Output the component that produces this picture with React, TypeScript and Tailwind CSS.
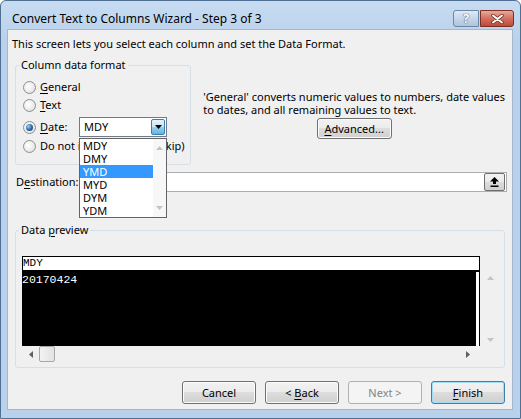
import React from "react";

const btnBase =
  "flex items-center justify-center rounded-[3px] border text-[11px] leading-none";
const btnNormal =
  "border-[#707070] bg-[linear-gradient(#f2f2f2_0%,#ebebeb_49%,#dddddd_50%,#cfcfcf_100%)] shadow-[inset_0_0_0_1px_#fcfcfc] text-black";

function U({ children }: { children: React.ReactNode }) {
  return <span className="underline underline-offset-[2px] decoration-1">{children}</span>;
}

function Radio({ checked }: { checked?: boolean }) {
  return (
    <span className="flex h-[13px] w-[13px] shrink-0 items-center justify-center rounded-full border border-[#8e8f8f] bg-[radial-gradient(circle_at_40%_40%,#ffffff,#ececec_55%,#cfcfcf)]">
      {checked && (
        <span className="h-[7px] w-[7px] rounded-full bg-[radial-gradient(circle_at_35%_35%,#9fd0f5,#2a64a3_55%,#16395f)]" />
      )}
    </span>
  );
}

const dateFormats = ["MDY", "DMY", "YMD", "MYD", "DYM", "YDM"];

function DateCombo() {
  return (
    <div className="relative z-10 h-[20px] w-[88px]">
      <div className="flex h-full items-center border border-[#6d7b8a] bg-white pl-[4px]">
        <span className="flex-1">MDY</span>
        <span className="mr-[1px] flex h-[16px] w-[14px] items-center justify-center rounded-[2px] border border-[#3c7fb1] bg-[linear-gradient(#e5f4fc_0%,#c4e5f6_49%,#98d1ef_50%,#68b3db_100%)]">
          <svg width="7" height="4" viewBox="0 0 7 4">
            <path d="M0 0H7L3.5 4Z" fill="#000" />
          </svg>
        </span>
      </div>
      {/* open list */}
      <div className="absolute left-0 top-[21px] flex h-[80px] w-[88px] border border-[#646464] bg-white">
        <div className="flex w-[73px] flex-col">
          {dateFormats.map((f) => (
            <div
              key={f}
              className={
                f === "YMD"
                  ? "h-[13px] bg-[#3399ff] pl-[3px] leading-[13px] text-white"
                  : "h-[13px] pl-[3px] leading-[13px] text-black"
              }
            >
              {f}
            </div>
          ))}
        </div>
        <div className="flex flex-1 flex-col items-center justify-between bg-[#f7f7f7] py-[7px]">
          <svg width="7" height="4" viewBox="0 0 7 4">
            <path d="M0 4H7L3.5 0Z" fill="#c4c4c4" />
          </svg>
          <svg width="7" height="4" viewBox="0 0 7 4">
            <path d="M0 0H7L3.5 4Z" fill="#c4c4c4" />
          </svg>
        </div>
      </div>
    </div>
  );
}

export default function App() {
  return (
    <div className="h-[419px] w-[521px] bg-white font-['Segoe_UI','Noto_Sans',sans-serif] text-[11px] text-black">
      <div className="flex h-full w-full flex-col rounded-t-[6px] border border-[#4f6f93] bg-[linear-gradient(#c7dcf2,#b9d1ea_40px,#b9d1ea)]">
        {/* title bar */}
        <div className="flex h-[28px] shrink-0 pl-[11px] pr-[6px]">
          <span className="flex-1 pt-[10px] text-[12px] leading-[16px]">Convert Text to Columns Wizard - Step 3 of 3</span>
          <div className="mt-[9px] flex h-[17px] gap-[1px]">
            <span className="flex w-[26px] items-center justify-center rounded-l-[3px] border border-[#6d87a6] bg-[linear-gradient(#dfe9f5,#c6d6ea_50%,#adc3dc)] text-[13px] font-bold text-white [text-shadow:0_0_1px_#2e4a6a,0_0_1px_#2e4a6a]">
              ?
            </span>
            <span className="flex w-[34px] items-center justify-center rounded-r-[3px] border border-[#7a2f24] bg-[linear-gradient(#e9a99b,#d2705f_50%,#c04a36)]">
              <svg width="13" height="10" viewBox="0 0 13 10">
                <path d="M2 1.5L11 8.5M11 1.5L2 8.5" stroke="#6b2418" strokeWidth="3.4" strokeLinecap="round" />
                <path d="M2 1.5L11 8.5M11 1.5L2 8.5" stroke="#ffffff" strokeWidth="2" strokeLinecap="round" />
              </svg>
            </span>
          </div>
        </div>

        {/* client area */}
        <div className="ml-[6px] flex h-[381px] w-[506px] flex-col border border-[#a3b7cf] bg-[#f0f0f0]">
          <div className="pl-[4px] pt-[6px] leading-[16px]">
            This screen lets you select each column and set the Data Format.
          </div>

          <div className="mt-[5px] flex">
            <fieldset className="ml-[7px] h-[108px] w-[178px] rounded-[3px] border border-[#d5dfe5]">
              <legend className="ml-[3px] px-[2px] leading-[16px]">Column data format</legend>
              <div className="flex flex-col pl-[7px] pt-[5px]">
                <div className="flex h-[18px] items-center gap-[4px]">
                  <Radio />
                  <span>
                    <U>G</U>eneral
                  </span>
                </div>
                <div className="flex h-[18px] items-center gap-[4px]">
                  <Radio />
                  <span>
                    <U>T</U>ext
                  </span>
                </div>
                <div className="mt-[3px] flex h-[20px] items-center gap-[4px]">
                  <Radio checked />
                  <span className="w-[35px]">
                    <U>D</U>ate:
                  </span>
                  <DateCombo />
                </div>
                <div className="flex h-[18px] items-center gap-[4px] whitespace-nowrap">
                  <Radio />
                  <span>Do not import column (skip)</span>
                </div>
              </div>
            </fieldset>

            <div className="ml-[12px] flex flex-1 flex-col items-center pr-[7px] pt-[33px]">
              <p className="self-start whitespace-nowrap leading-[13px]">
                'General' converts numeric values to numbers, date values
                <br />
                to dates, and all remaining values to text.
              </p>
              <button className={`${btnBase} ${btnNormal} mt-[2px] h-[21px] w-[75px]`}>
                <U>A</U>dvanced...
              </button>
            </div>
          </div>

          <div className="mt-[7px] flex h-[20px] items-center">
            <span className="w-[71px] pl-[8px]">
              D<U>e</U>stination:
            </span>
            <div className="mr-[5px] flex h-[20px] flex-1 items-center justify-end border border-[#abadb3] bg-white pr-[1px]">
              <span className="flex h-[18px] w-[21px] items-center justify-center rounded-[2px] border border-[#707070] bg-[linear-gradient(#f2f2f2_0%,#ebebeb_49%,#dddddd_50%,#cfcfcf_100%)]">
                <svg width="9" height="10" viewBox="0 0 9 10">
                  <path d="M4.5 0L9 4.5H6V7H3V4.5H0Z" fill="#000" />
                  <rect x="0.5" y="8.5" width="8" height="1.5" fill="#000" />
                </svg>
              </span>
            </div>
          </div>

          <fieldset className="ml-[7px] mt-[30px] h-[146px] w-[490px] rounded-[3px] border border-[#d5dfe5]">
            <legend className="ml-[3px] px-[2px] leading-[16px]">
              Data <U>p</U>review
            </legend>
            <div className="flex pl-[6px] pt-[18px]">
              <div className="flex w-[458px] flex-col">
                <div className="h-[16px] border border-b-2 border-black bg-white font-['Liberation_Mono',monospace] text-[11px] leading-[13px]">
                  MDY
                </div>
                <div className="flex h-[74px]">
                  <div className="flex-1 bg-black pt-[1px] font-['Liberation_Mono',monospace] text-[11.5px] leading-[14px] text-white">
                    20170424
                  </div>
                  <div className="w-[4px] border-r border-black bg-white" />
                </div>
                <div className="flex h-[16px] w-[454px] items-center bg-[#f0f0f0]">
                  <span className="flex w-[17px] justify-center">
                    <svg width="4" height="7" viewBox="0 0 4 7">
                      <path d="M4 0V7L0 3.5Z" fill="#606060" />
                    </svg>
                  </span>
                  <span className="h-[16px] w-[16px] rounded-[2px] border border-[#a8a8a8] bg-[linear-gradient(90deg,#f3f3f3,#e2e2e2)]" />
                  <span className="flex-1" />
                  <span className="flex w-[17px] justify-center">
                    <svg width="4" height="7" viewBox="0 0 4 7">
                      <path d="M0 0V7L4 3.5Z" fill="#606060" />
                    </svg>
                  </span>
                </div>
              </div>
              <div className="ml-[2px] mt-[16px] flex h-[74px] w-[17px] flex-col items-center justify-between py-[4px]">
                <svg width="7" height="4" viewBox="0 0 7 4">
                  <path d="M0 4H7L3.5 0Z" fill="#c4c4c4" />
                </svg>
                <svg width="7" height="4" viewBox="0 0 7 4">
                  <path d="M0 0H7L3.5 4Z" fill="#c4c4c4" />
                </svg>
              </div>
            </div>
          </fieldset>

          <div className="mt-[13px] flex justify-end gap-[9px] pr-[7px]">
            <button className={`${btnBase} ${btnNormal} h-[23px] w-[74px]`}>Cancel</button>
            <button className={`${btnBase} ${btnNormal} h-[23px] w-[74px]`}>
              &lt;&nbsp;<U>B</U>ack
            </button>
            <button className={`${btnBase} h-[23px] w-[74px] border-[#adb2b5] bg-[#f4f4f4] text-[#838383]`}>
              Next &gt;
            </button>
            <button className={`${btnBase} h-[23px] w-[74px] border-[#3c7fb1] bg-[linear-gradient(#f2f2f2_0%,#ebebeb_49%,#dddddd_50%,#cfcfcf_100%)] shadow-[inset_0_0_0_1px_#a4dcf6] text-black`}>
              <U>F</U>inish
            </button>
          </div>
        </div>
      </div>
    </div>
  );
}
